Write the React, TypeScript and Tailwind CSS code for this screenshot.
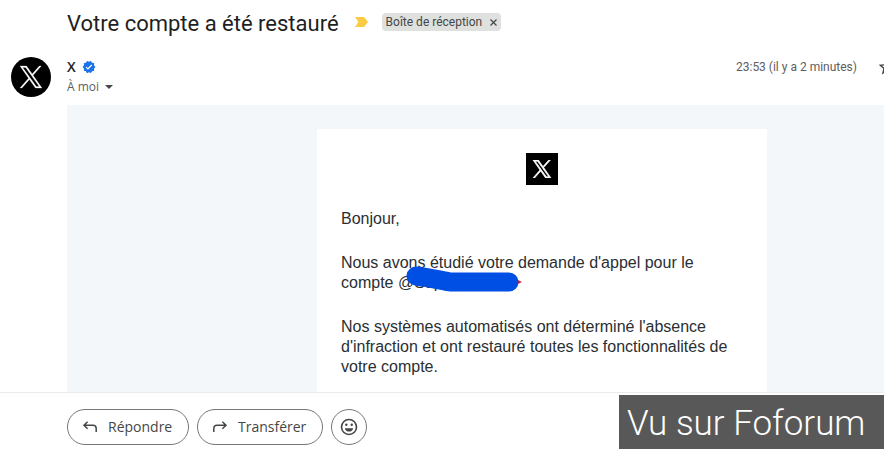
import React from 'react';

const BODY_PARAGRAPHS = [
  "Nos systèmes automatisés ont déterminé l'absence d'infraction et ont restauré toutes les fonctionnalités de votre compte.",
];

const XLogo: React.FC<{ className?: string; weight?: number }> = ({ className, weight = 0.3 }) => (
  <svg viewBox="0 0 24 24" fill="currentColor" stroke="currentColor" strokeWidth={weight} className={className} aria-hidden="true">
    <path d="M14.258 10.152 23.176 0h-2.113l-7.747 8.813L7.133 0H0l9.352 13.328L0 23.973h2.113l8.176-9.309 6.531 9.309h7.133zm-2.895 3.293-.949-1.328L2.875 1.56h3.246l6.086 8.523.945 1.328 7.91 11.078h-3.246z" />
  </svg>
);

const VerifiedIcon = () => (
  <svg viewBox="0 0 24 24" className="h-3.5 w-3.5" role="img" aria-label="Validé">
    <path
      fill="#1a73e8"
      d="m23 12-2.44-2.79.34-3.69-3.61-.82-1.89-3.2L12 2.96 8.6 1.5 6.71 4.69 3.1 5.5l.34 3.7L1 12l2.44 2.79-.34 3.7 3.61.82L8.6 22.5 12 21.03l3.4 1.46 1.89-3.19 3.61-.82-.34-3.69z"
    />
    <path fill="#fff" d="m10.09 16.72-3.8-3.81 1.48-1.48 2.32 2.33 5.85-5.87 1.48 1.48z" />
  </svg>
);

const SubjectRow = () => (
  <div className="flex items-center pl-[67px] pt-1.5">
    <h1 className="pt-1 font-['Roboto',sans-serif] text-[22px] leading-7 text-[#1f1f1f]">Votre compte a été restauré</h1>
    <svg viewBox="0 0 13 10" className="ml-4 h-2.5 w-[13px]" aria-hidden="true">
      <path fill="#fbcb43" d="M0 0h8.5q.8 0 1.3.7L13 5l-3.2 4.3q-.5.7-1.3.7H0l3.4-5z" />
    </svg>
    <div className="ml-3.5 flex h-[18px] items-center rounded bg-[#dfe1df] px-1 font-['Roboto',sans-serif] text-xs text-[#444746]">
      <span>Boîte de réception</span>
      <button type="button" aria-label="Retirer le libellé" className="ml-2 text-[#444746]">
        <svg viewBox="0 0 7 7" className="h-[7px] w-[7px]" stroke="currentColor" strokeWidth="1.2">
          <path d="M.5.5l6 6M6.5.5l-6 6" />
        </svg>
      </button>
    </div>
  </div>
);

const SenderRow = () => (
  <div className="flex items-start pl-[11px] pt-[19px]">
    <div className="flex h-10 w-10 shrink-0 items-center justify-center rounded-full bg-black text-white">
      <XLogo className="h-6 w-[22px]" />
    </div>
    <div className="ml-4 flex-1">
      <div className="flex h-5 items-center gap-1.5">
        <span className="text-sm font-semibold text-[#1f1f1f]">X</span>
        <VerifiedIcon />
      </div>
      <button type="button" className="flex h-5 items-center gap-1.5 text-xs text-[#5e5e5e]">
        À moi
        <svg viewBox="0 0 8 4" className="h-1 w-2" fill="#444746" aria-hidden="true">
          <path d="M0 0h8L4 4z" />
        </svg>
      </button>
    </div>
    <span className="font-['Roboto',sans-serif] text-xs leading-5 text-[#5e5e5e]">23:53 (il y a 2 minutes)</span>
    <button type="button" aria-label="Non suivi" className="-mr-[13px] ml-5 shrink-0 text-[#444746]">
      <svg viewBox="0 0 24 24" className="h-5 w-5" fill="currentColor">
        <path d="m22 9.24-7.19-.62L12 2 9.19 8.63 2 9.24l5.46 4.73L5.82 21 12 17.27 18.18 21l-1.63-7.03zM12 15.4l-3.76 2.27 1-4.28-3.32-2.88 4.38-.38L12 6.1l1.71 4.04 4.38.38-3.32 2.88 1 4.28z" />
      </svg>
    </button>
  </div>
);

const MessageCard = () => (
  <article className="w-[450px] bg-white p-6 font-['Liberation_Sans',Arial,sans-serif] text-base leading-5 text-[#292f33]">
    <div className="mx-auto flex h-8 w-8 items-center justify-center bg-black text-white">
      <XLogo className="h-[18px] w-5" weight={1} />
    </div>
    <p className="mt-6">Bonjour,</p>
    <p className="mt-6">
      Nous avons étudié votre demande d'appel pour le compte{' '}
      <span className="relative">
        @Sup
        {/* marker stroke hiding the handle */}
        <svg viewBox="0 0 124 28" className="absolute -top-2 left-2 h-7 w-[124px] max-w-none" aria-hidden="true">
          <path fill="#e8202a" d="M108 12l8 4-8 4z" />
          <path
            d="M10 10c10 1 22 4 34 6h59"
            fill="none"
            stroke="#004fe5"
            strokeWidth="19"
            strokeLinecap="round"
            strokeLinejoin="round"
          />
        </svg>
      </span>
    </p>
    {BODY_PARAGRAPHS.map((text) => (
      <p key={text} className="mt-6">
        {text}
      </p>
    ))}
  </article>
);

const pillClass =
  'flex h-9 items-center rounded-full border border-[#747775] text-sm font-medium text-[#444746]';

const ReplyBar = () => (
  <footer className="relative flex shrink-0 items-center gap-2 border-t border-[#e9ebee] bg-white pb-1 pl-[67px] pt-4">
    <button type="button" className={`${pillClass} w-[122px] gap-2.5 pl-3.5`}>
      <svg viewBox="0 0 16 12" className="h-3 w-4" fill="none" stroke="currentColor" strokeWidth="1.5" aria-hidden="true">
        <path d="M5.6 .8 2 4.3 5.6 7.8M2 4.3h9q3.2 0 3.2 3.2V11" />
      </svg>
      Répondre
    </button>
    <button type="button" className={`${pillClass} w-[126px] gap-2.5 pl-3.5`}>
      <svg viewBox="0 0 16 12" className="h-3 w-4" fill="none" stroke="currentColor" strokeWidth="1.5" aria-hidden="true">
        <path d="M10.4 .8 14 4.3 10.4 7.8M14 4.3H5Q1.8 4.3 1.8 7.5V11" />
      </svg>
      Transférer
    </button>
    <button type="button" aria-label="Ajouter une réaction" className={`${pillClass} w-9 justify-center`}>
      <svg viewBox="0 0 18 18" className="h-[18px] w-[18px]" aria-hidden="true">
        <circle cx="9" cy="9" r="7.5" fill="none" stroke="currentColor" strokeWidth="1.6" />
        <circle cx="6.3" cy="6.8" r="1.2" fill="currentColor" />
        <circle cx="11.7" cy="6.8" r="1.2" fill="currentColor" />
        <path d="M4.8 10.2h8.4a4.3 4.3 0 0 1-8.4 0z" fill="currentColor" />
      </svg>
    </button>
    <div className="absolute bottom-0 right-0 flex h-[54px] w-[265px] items-center bg-[#585858] pl-2 pt-1 font-['Roboto',sans-serif] text-[35px] font-light text-white">
      Vu sur Foforum
    </div>
  </footer>
);

export default function App() {
  return (
    <div className="flex h-screen flex-col overflow-hidden bg-white font-['Open_Sans',sans-serif]">
      <header className="shrink-0 pb-2">
        <SubjectRow />
        <SenderRow />
      </header>
      <main className="ml-[67px] min-h-0 flex-1 overflow-hidden bg-[#f3f7fa] pl-[250px] pt-6">
        <MessageCard />
      </main>
      <ReplyBar />
    </div>
  );
}
